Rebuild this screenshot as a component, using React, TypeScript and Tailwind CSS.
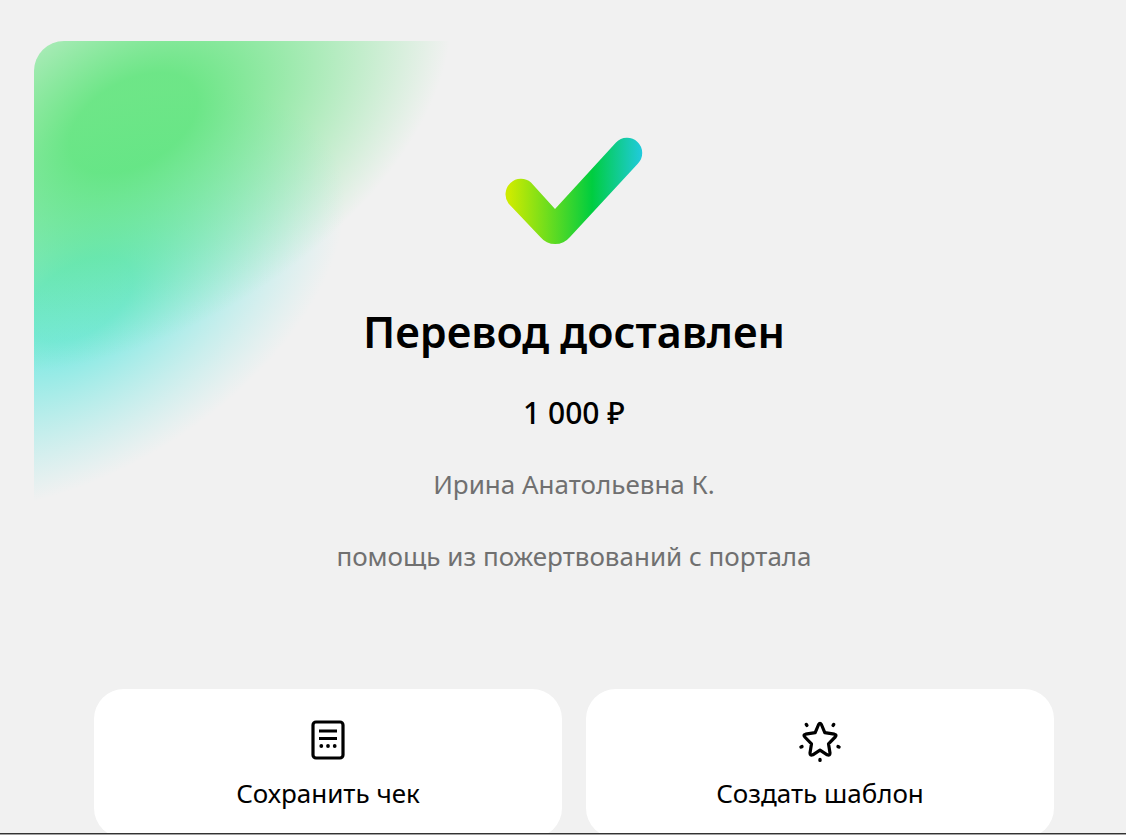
type IconProps = {
  className?: string
}

function GradientBackdrop() {
  return (
    <svg aria-hidden="true" className="absolute left-0 top-0" width="460" height="480" viewBox="0 0 460 480" fill="none">
      <defs>
        <radialGradient id="glow-cyan" cx="0" cy="0" r="1" gradientUnits="userSpaceOnUse" gradientTransform="translate(46 258) rotate(-32) scale(294 170)">
          <stop offset="0.2" stopColor="#50e6dc" stopOpacity="0.74" />
          <stop offset="1" stopColor="#78e8e6" stopOpacity="0" />
        </radialGradient>
        <radialGradient id="glow-green" cx="0" cy="0" r="1" gradientUnits="userSpaceOnUse" gradientTransform="translate(99 82) rotate(-30) scale(348 208)">
          <stop offset="0.2" stopColor="#58e476" stopOpacity="0.86" />
          <stop offset="1" stopColor="#58e476" stopOpacity="0" />
        </radialGradient>
      </defs>
      <rect width="460" height="480" fill="url(#glow-cyan)" />
      <rect width="460" height="480" fill="url(#glow-green)" />
    </svg>
  )
}

function SuccessMark({ className }: IconProps) {
  return (
    <svg aria-hidden="true" className={className} viewBox="0 0 138 108" fill="none">
      <defs>
        <linearGradient id="mark" x1="0" y1="0" x2="138" y2="0" gradientUnits="userSpaceOnUse">
          <stop offset="0.03" stopColor="#cdeb00" />
          <stop offset="0.63" stopColor="#00cd3f" />
          <stop offset="1" stopColor="#21cae0" />
        </linearGradient>
      </defs>
      <path
        d="M3.500 66.500A15.500 15.500 0 0 1 26 45.500L50 72L111 5.500A15.200 15.200 0 0 1 133 26.500L65 100A19.200 19.200 0 0 1 35.300 100Z"
        fill="url(#mark)"
      />
    </svg>
  )
}

function ReceiptIcon({ className }: IconProps) {
  return (
    <svg aria-hidden="true" className={className} viewBox="0 0 48 48" fill="none">
      <rect x="9" y="6" width="30" height="36" rx="3" stroke="currentColor" strokeWidth="3.2" />
      <path d="M15 15h18M15 22.500h18" stroke="currentColor" strokeWidth="3" />
      <circle cx="17.300" cy="30" r="1.900" fill="currentColor" />
      <circle cx="24" cy="30" r="1.900" fill="currentColor" />
      <circle cx="30.700" cy="30" r="1.900" fill="currentColor" />
    </svg>
  )
}

function StarIcon({ className }: IconProps) {
  return (
    <svg aria-hidden="true" className={className} viewBox="0 0 48 48" fill="none">
      <path
        d="M22.600 8.500Q24 6 25.400 8.500L28.800 16.700L38.400 18.200Q41.200 19 39.200 21L32.500 27.800L34 37Q34 40 31.200 38.800L24 34.200L16.800 38.800Q14 40 14 37L15.500 27.800L8.800 21Q6.800 19 9.600 18.200L19.200 16.700Z"
        stroke="currentColor"
        strokeWidth="3.2"
        strokeLinejoin="round"
      />
      <path d="m10.300 8.500.6.900M37.700 8.500l-.6.900M5 31l1-.4M43 31l-1-.4M24 43.500v.9" stroke="currentColor" strokeWidth="3.400" strokeLinecap="round" />
    </svg>
  )
}

const actions = [
  { label: 'Сохранить чек', Icon: ReceiptIcon },
  { label: 'Создать шаблон', Icon: StarIcon },
]

export default function App() {
  return (
    <div className="relative h-screen overflow-hidden bg-[#f1f1f1] pl-[34px] pr-3 pt-[41px] font-['Noto_Sans','Open_Sans',sans-serif] text-black">
      <main className="relative overflow-hidden rounded-[30px] px-[60px] pb-[60px] pt-24">
        <GradientBackdrop />
        <div className="relative flex flex-col items-center text-center">
          <SuccessMark className="h-[108px] w-[138px]" />
          <h1 className="mt-[59px] text-[43px] font-semibold leading-[56px]">Перевод доставлен</h1>
          <p className="mt-[35px] text-[30px] font-medium leading-9">1 000 ₽</p>
          <p className="mt-[35px] text-[26px] leading-9 text-[#707070]">Ирина Анатольевна К.</p>
          <p className="mt-9 text-[26px] leading-9 text-[#707070]">помощь из пожертвований с портала</p>
        </div>
        <div className="relative mt-[115px] grid grid-cols-2 gap-6">
          {actions.map(({ label, Icon }) => (
            <button
              key={label}
              type="button"
              className="flex flex-col items-center rounded-[30px] bg-white px-6 py-[27px]"
            >
              <Icon className="h-12 w-12" />
              <span className="mt-[11px] text-[26px] leading-9">{label}</span>
            </button>
          ))}
        </div>
      </main>
      <div className="absolute inset-x-0 bottom-0 h-[2px] border-t border-[#333333] bg-[#a0a0a0]" />
    </div>
  )
}
